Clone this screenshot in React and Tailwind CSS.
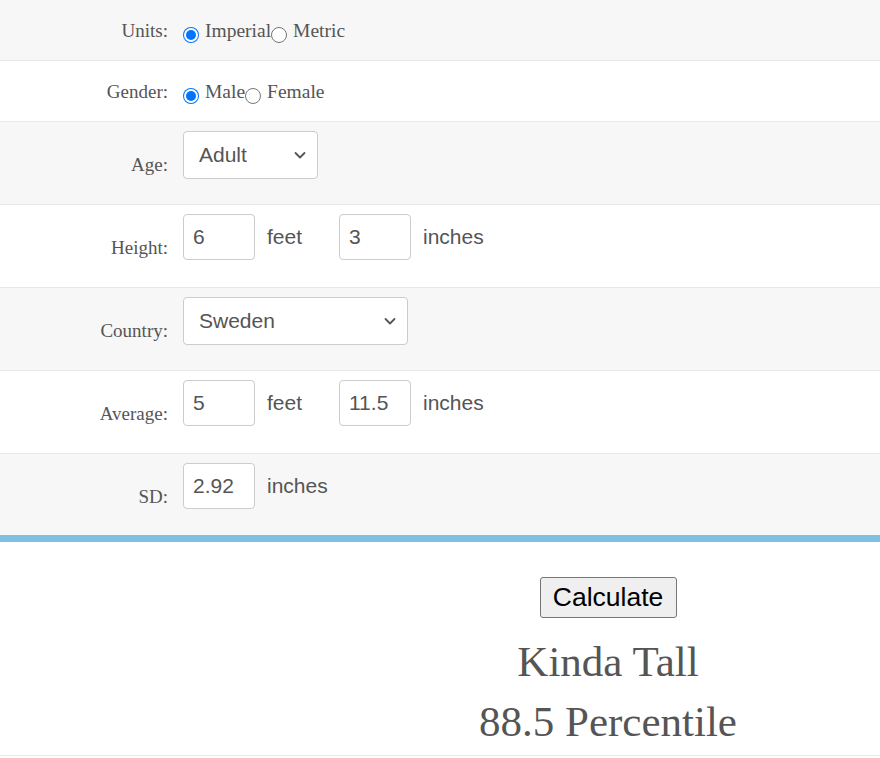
const serif = { fontFamily: '"Liberation Serif", "Times New Roman", serif' };

function Row({ label, gray, tall = true, border = true, children }) {
  return (
    <div
      className={`flex ${gray ? "bg-[#f7f7f7]" : "bg-white"} ${border ? "border-b border-[#e8e8e8]" : ""} ${tall ? "h-[83px]" : "h-[61px]"}`}
    >
      <div
        className={`w-[168px] shrink-0 text-right text-[19px] leading-[20px] text-[#555] font-['Liberation_Serif',serif] ${tall ? "pt-[33px]" : "pt-[21px]"}`}
      >
        {label}
      </div>
      <div className={`ml-[15px] flex items-start ${tall ? "pt-[9px]" : "pt-[21px]"}`}>{children}</div>
    </div>
  );
}

function Radio({ checked, name, label }) {
  return (
    <label className="flex items-start text-[19.5px] leading-[20px] text-[#555] font-['Liberation_Serif',serif]">
      <span
        className={`mt-[6px] mr-[6px] w-[16px] h-[16px] rounded-full shrink-0 flex items-center justify-center ${
          checked ? "bg-[#0075ff]" : "border-[1.5px] border-[#767676] bg-white"
        }`}
      >
        {checked && <span className="w-[10px] h-[10px] rounded-full bg-[#0075ff] ring-2 ring-white" />}
      </span>
      <input type="radio" name={name} defaultChecked={checked} className="hidden" />
      <span>{label}</span>
    </label>
  );
}

function TextBox({ value }) {
  return (
    <input
      type="text"
      defaultValue={value}
      className="w-[72px] h-[46px] rounded-[4px] border border-[#ccc] bg-white px-[9px] text-[21px] text-[#555] font-['Liberation_Sans',Arial,sans-serif] outline-none"
    />
  );
}

function Unit({ children, wide }) {
  return (
    <span
      className={`ml-[12px] h-[46px] flex items-center text-[21px] text-[#555] font-['Liberation_Sans',Arial,sans-serif] ${
        wide ? "w-[72px]" : ""
      }`}
    >
      {children}
    </span>
  );
}

function Select({ value, width }) {
  return (
    <div
      className={`${width} h-[48px] rounded-[4px] border border-[#ccc] bg-white flex items-center justify-between pl-[15px] pr-[10px] text-[21px] text-[#555] font-['Liberation_Sans',Arial,sans-serif]`}
    >
      <span>{value}</span>
      <svg width="14" height="14" viewBox="0 0 14 14" fill="none">
        <path d="M2.5 5l4.5 4.5L11.5 5" stroke="#555" strokeWidth="1.8" strokeLinecap="round" strokeLinejoin="round" />
      </svg>
    </div>
  );
}

export default function App() {
  return (
    <div className="w-[880px] bg-white" style={serif}>
      <Row label="Units:" gray tall={false}>
        <Radio name="units" checked label="Imperial" />
        <Radio name="units" label="Metric" />
      </Row>
      <Row label="Gender:" tall={false}>
        <Radio name="gender" checked label="Male" />
        <Radio name="gender" label="Female" />
      </Row>
      <Row label="Age:" gray>
        <Select value="Adult" width="w-[135px]" />
      </Row>
      <Row label="Height:">
        <TextBox value="6" />
        <Unit wide>feet</Unit>
        <TextBox value="3" />
        <Unit>inches</Unit>
      </Row>
      <Row label="Country:" gray>
        <Select value="Sweden" width="w-[225px]" />
      </Row>
      <Row label="Average:">
        <TextBox value="5" />
        <Unit wide>feet</Unit>
        <TextBox value="11.5" />
        <Unit>inches</Unit>
      </Row>
      <div className="h-[81px]">
        <Row label="SD:" gray border={false}>
          <TextBox value="2.92" />
          <Unit>inches</Unit>
        </Row>
      </div>
      <div className="h-[7px] bg-[#7dc1e3]" />

      {/* Result */}
      <div className="flex border-b border-[#e8e8e8]">
        <div className="w-[336px] shrink-0" />
        <div className="flex-1 flex flex-col items-center pt-[35px] pb-[3px]">
          <button className="w-[137px] h-[41px] rounded-[3px] border border-[#767676] bg-[#efefef] text-[26.5px] leading-none text-black font-['Liberation_Sans',Arial,sans-serif]">
            Calculate
          </button>
          <div className="mt-[14px] text-[43px] leading-[60px] text-[#555] font-['Liberation_Serif',serif]">Kinda Tall</div>
          <div className="text-[43px] leading-[60px] text-[#555] font-['Liberation_Serif',serif]">88.5 Percentile</div>
        </div>
      </div>
    </div>
  );
}
